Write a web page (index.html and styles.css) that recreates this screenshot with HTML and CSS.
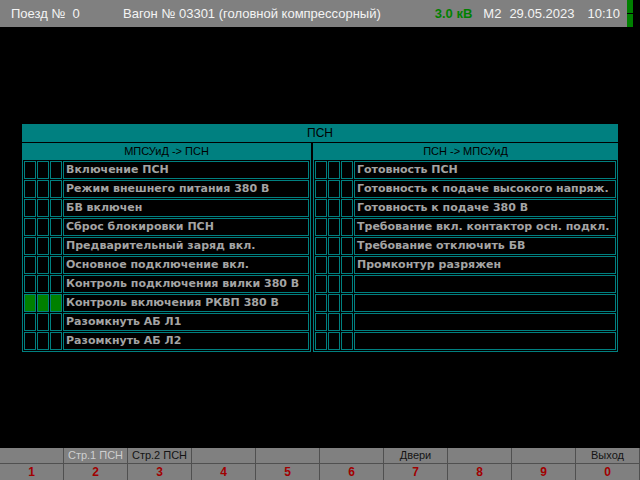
FILE: index.html
```html
<!DOCTYPE html>
<html lang="ru">
<head>
<meta charset="utf-8">
<title>ПСН</title>
<link rel="stylesheet" href="styles.css">
</head>
<body>
<div class="screen">
  <header class="topbar">
    <div class="info">
      <span class="train">Поезд №&nbsp; 0</span>
      <span class="wagon">Вагон № 03301 (головной компрессорный)</span>
      <span class="volt">3.0 кВ</span>
      <span class="mode">М2</span>
      <span class="date">29.05.2023</span>
      <span class="time">10:10</span>
    </div>
    <div class="ind"><i></i><i></i></div>
  </header>

  <section class="panel">
    <div class="ptitle">ПСН</div>
    <div class="cols">
      <div class="col left">
        <div class="chead">МПСУиД -&gt; ПСН</div>
        <div class="cbody">
          <div class="row"><span class="c"></span><span class="c"></span><span class="c"></span><span class="t">Включение ПСН</span></div>
          <div class="row"><span class="c"></span><span class="c"></span><span class="c"></span><span class="t">Режим внешнего питания 380 В</span></div>
          <div class="row"><span class="c"></span><span class="c"></span><span class="c"></span><span class="t">БВ включен</span></div>
          <div class="row"><span class="c"></span><span class="c"></span><span class="c"></span><span class="t">Сброс блокировки ПСН</span></div>
          <div class="row"><span class="c"></span><span class="c"></span><span class="c"></span><span class="t">Предварительный заряд вкл.</span></div>
          <div class="row"><span class="c"></span><span class="c"></span><span class="c"></span><span class="t">Основное подключение вкл.</span></div>
          <div class="row"><span class="c"></span><span class="c"></span><span class="c"></span><span class="t">Контроль подключения вилки 380 В</span></div>
          <div class="row"><span class="c on"></span><span class="c on"></span><span class="c on"></span><span class="t">Контроль включения РКВП 380 В</span></div>
          <div class="row"><span class="c"></span><span class="c"></span><span class="c"></span><span class="t">Разомкнуть АБ Л1</span></div>
          <div class="row"><span class="c"></span><span class="c"></span><span class="c"></span><span class="t">Разомкнуть АБ Л2</span></div>
        </div>
      </div>
      <div class="col right">
        <div class="chead">ПСН -&gt; МПСУиД</div>
        <div class="cbody">
          <div class="row"><span class="c"></span><span class="c"></span><span class="c"></span><span class="t">Готовность ПСН</span></div>
          <div class="row"><span class="c"></span><span class="c"></span><span class="c"></span><span class="t">Готовность к подаче высокого напряж.</span></div>
          <div class="row"><span class="c"></span><span class="c"></span><span class="c"></span><span class="t">Готовность к подаче 380 В</span></div>
          <div class="row"><span class="c"></span><span class="c"></span><span class="c"></span><span class="t">Требование вкл. контактор осн. подкл.</span></div>
          <div class="row"><span class="c"></span><span class="c"></span><span class="c"></span><span class="t">Требование отключить БВ</span></div>
          <div class="row"><span class="c"></span><span class="c"></span><span class="c"></span><span class="t">Промконтур разряжен</span></div>
          <div class="row"><span class="c"></span><span class="c"></span><span class="c"></span><span class="t"></span></div>
          <div class="row"><span class="c"></span><span class="c"></span><span class="c"></span><span class="t"></span></div>
          <div class="row"><span class="c"></span><span class="c"></span><span class="c"></span><span class="t"></span></div>
          <div class="row"><span class="c"></span><span class="c"></span><span class="c"></span><span class="t"></span></div>
        </div>
      </div>
    </div>
  </section>

  <footer class="keys">
    <div class="lbl"></div>
    <div class="lbl dim">Стр.1 ПСН</div>
    <div class="lbl">Стр.2 ПСН</div>
    <div class="lbl"></div>
    <div class="lbl"></div>
    <div class="lbl"></div>
    <div class="lbl">Двери</div>
    <div class="lbl"></div>
    <div class="lbl"></div>
    <div class="lbl">Выход</div>
    <div class="num">1</div>
    <div class="num">2</div>
    <div class="num">3</div>
    <div class="num">4</div>
    <div class="num">5</div>
    <div class="num">6</div>
    <div class="num">7</div>
    <div class="num">8</div>
    <div class="num">9</div>
    <div class="num">0</div>
  </footer>
</div>
</body>
</html>
```

FILE: styles.css
```css
html, body {
  margin: 0;
  padding: 0;
  background: #000;
}

.screen {
  width: 640px;
  height: 480px;
  display: flex;
  flex-direction: column;
  background: #000;
  font-family: "Liberation Sans", Arial, sans-serif;
  overflow: hidden;
}

/* ---------- top bar ---------- */
.topbar {
  display: flex;
  height: 27px;
}

.info {
  width: 627px;
  display: flex;
  align-items: center;
  background: #808080;
  color: #f4f4f4;
  font-size: 13px;
  padding-left: 11px;
  box-sizing: border-box;
  white-space: nowrap;
}

.train { width: 112px; }
.wagon { flex: 1; }
.volt { color: #008000; font-weight: bold; }
.mode { margin-left: 11px; }
.date { margin-left: 8px; }
.time { margin-left: 13px; margin-right: 7px; }

.ind {
  width: 6px;
  display: flex;
  flex-direction: column;
  gap: 1px;
}
.ind i {
  flex: 1;
  background: #008000;
}

/* ---------- panel ---------- */
.panel {
  width: 596px;
  margin: 97px 0 0 22px;
  background: #008080;
  color: #000;
}

.ptitle {
  height: 18px;
  line-height: 18px;
  text-align: center;
  font-size: 12px;
  border-bottom: 1px solid #000;
}

.cols {
  display: flex;
  gap: 2px;
  background: #000;
}

.col {
  background: #008080;
  padding: 0 1px 1px 1px;
}
.col.left { width: 289px; box-sizing: border-box; }
.col.right { flex: 1; }

.chead {
  height: 17px;
  line-height: 17px;
  text-align: center;
  font-size: 11px;
}

.cbody {
  background: #000;
  padding: 1px;
  display: flex;
  flex-direction: column;
  gap: 1px;
}

.row {
  display: flex;
  gap: 1px;
  height: 18px;
}

.c, .t {
  box-sizing: border-box;
  border: 1px solid #008080;
}

.c { width: 12px; }
.c.on { background: #008000; }

.t {
  flex: 1;
  padding-left: 2px;
  line-height: 16px;
  font-family: "DejaVu Sans", Verdana, sans-serif;
  font-weight: bold;
  font-size: 11px;
  color: #a4a4a4;
  white-space: nowrap;
  overflow: hidden;
}

/* ---------- key bar ---------- */
.keys {
  margin-top: auto;
  display: grid;
  grid-template-columns: repeat(10, 64px);
  grid-template-rows: 16px 16px;
  background: #808080;
}

.lbl, .num {
  border-right: 1px solid #505050;
  text-align: center;
}

.lbl {
  border-bottom: 1px solid #505050;
  font-size: 11px;
  line-height: 15px;
  color: #141414;
}
.lbl.dim { color: #cfcfcf; }

.num {
  font-size: 12px;
  font-weight: bold;
  line-height: 16px;
  color: #a00000;
}
```
